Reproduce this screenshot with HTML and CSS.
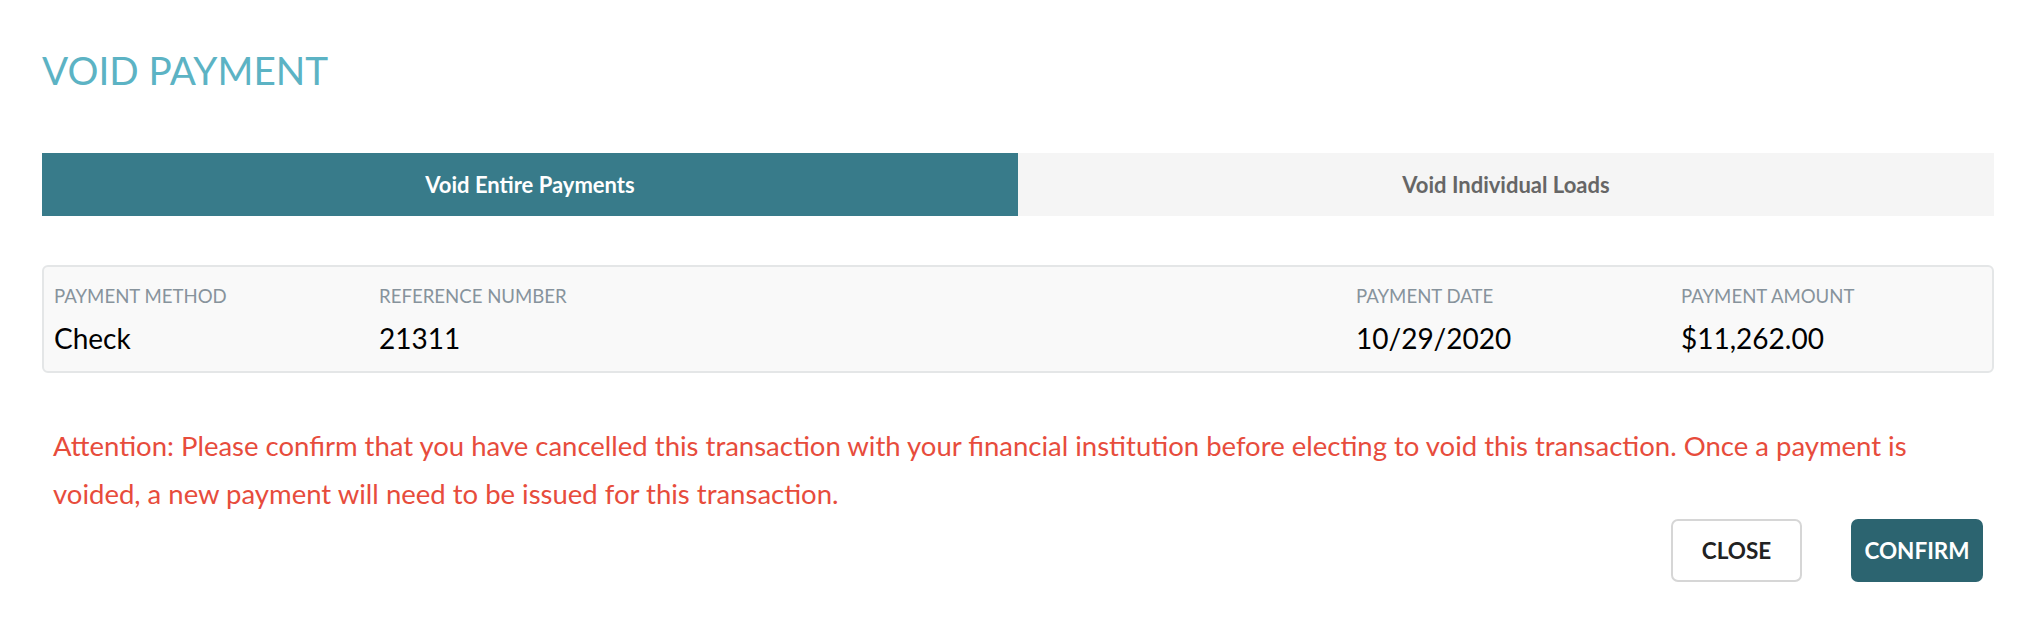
FILE: index.html
```html
<!DOCTYPE html>
<html>
<head>
<meta charset="utf-8">
<link rel="stylesheet" href="styles.css">
</head>
<body>
<div class="modal">
  <h1 class="title">VOID PAYMENT</h1>
  <div class="tabs">
    <div class="tab active">Void Entire Payments</div>
    <div class="tab">Void Individual Loads</div>
  </div>
  <div class="info">
    <div class="col"><div class="label">PAYMENT METHOD</div><div class="value">Check</div></div>
    <div class="col"><div class="label">REFERENCE NUMBER</div><div class="value">21311</div></div>
    <div class="col"><div class="label">PAYMENT DATE</div><div class="value">10/29/2020</div></div>
    <div class="col"><div class="label">PAYMENT AMOUNT</div><div class="value">$11,262.00</div></div>
  </div>
  <p class="attention">Attention: Please confirm that you have cancelled this transaction with your financial institution before electing to void this transaction. Once a payment is voided, a new payment will need to be issued for this transaction.</p>
  <div class="actions">
    <button class="btn btn-close">CLOSE</button>
    <button class="btn btn-confirm">CONFIRM</button>
  </div>
</div>
</body>
</html>
```
FILE: styles.css
```css
* { box-sizing: border-box; }
html, body { margin: 0; padding: 0; background: #fff; }
body { font-family: Lato, "Open Sans", sans-serif; }
.modal { padding: 0 46px 0 42px; }
.title {
  margin: 0;
  padding-top: 48px;
  font-size: 38.7px;
  font-weight: 400;
  line-height: 44px;
  color: #5cb3c4;
}
.tabs { display: flex; margin-top: 61px; height: 63px; }
.tab {
  flex: 1;
  display: flex; align-items: center; justify-content: center;
  background: #f5f5f5;
  color: #666;
  font-size: 22px;
  font-weight: 700;
}
.tab.active { background: #387b8a; color: #fff; }
.info {
  display: grid;
  grid-template-columns: 325px 977px 325px 1fr;
  margin-top: 49px;
  height: 108px;
  padding: 17px 0 0 10px;
  background: #f9f9f9;
  border: 2px solid #e4e6e7;
  border-radius: 6px;
}
.label { font-size: 18.6px; color: #87939c; line-height: 24px; }
.value { font-size: 28px; color: #000; line-height: 34px; margin-top: 13px; }
.attention {
  margin: 49px 0 0;
  padding-left: 11px;
  color: #e74c3c;
  font-size: 27.5px;
  line-height: 48px;
}
.actions { display: flex; justify-content: flex-end; gap: 49px; margin-top: 1px; padding-right: 11px; }
.btn {
  height: 63px;
  border-radius: 7px;
  font-family: Lato, sans-serif;
  font-size: 22.5px;
  font-weight: 700;
}
.btn-close { width: 131px; background: #fff; color: #222; border: 2px solid #d6d6d6; }
.btn-confirm { width: 132px; background: #2c6470; color: #fff; border: none; }
```
